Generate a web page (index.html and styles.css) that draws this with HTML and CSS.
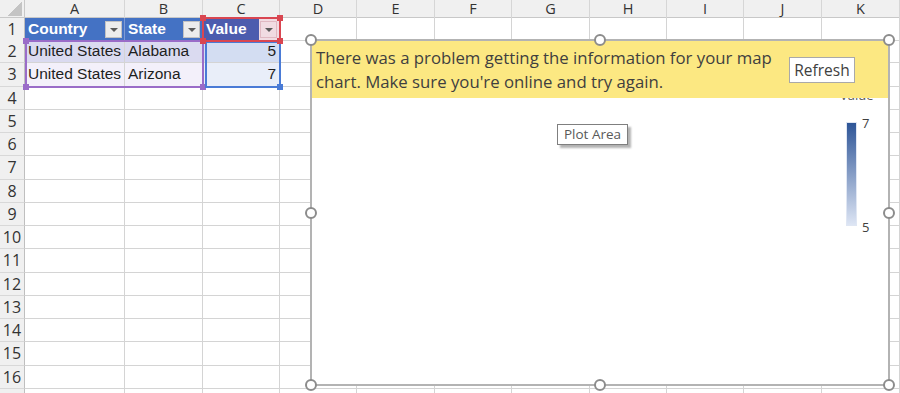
FILE: index.html
```html
<!DOCTYPE html>
<html lang="en">
<head>
    <meta charset="UTF-8">
    <title>Map chart - Excel</title>
    <link rel="stylesheet" href="styles.css">
</head>
<body>
    <div class="sheet">
        <div class="row heads">
            <div class="corner"></div>
            <div class="ch">A</div><div class="ch">B</div><div class="ch">C</div><div class="ch">D</div>
            <div class="ch">E</div><div class="ch">F</div><div class="ch">G</div><div class="ch">H</div>
            <div class="ch">I</div><div class="ch">J</div><div class="ch">K</div>
        </div>
        <div class="row first">
            <div class="rh">1</div>
            <div class="c th">Country<span class="filter"></span></div>
            <div class="c th">State<span class="filter"></span></div>
            <div class="c th sel">Value<span class="filter"></span></div>
            <div class="c"></div><div class="c"></div><div class="c"></div><div class="c"></div>
            <div class="c"></div><div class="c"></div><div class="c"></div><div class="c"></div>
        </div>
        <div class="row">
            <div class="rh">2</div>
            <div class="c band">United States</div>
            <div class="c band">Alabama</div>
            <div class="c num band-v">5</div>
            <div class="c"></div><div class="c"></div><div class="c"></div><div class="c"></div>
            <div class="c"></div><div class="c"></div><div class="c"></div><div class="c"></div>
        </div>
        <div class="row">
            <div class="rh">3</div>
            <div class="c plain">United States</div>
            <div class="c plain">Arizona</div>
            <div class="c num plain-v">7</div>
            <div class="c"></div><div class="c"></div><div class="c"></div><div class="c"></div>
            <div class="c"></div><div class="c"></div><div class="c"></div><div class="c"></div>
        </div>
        <div class="row"><div class="rh">4</div><div class="c"></div><div class="c"></div><div class="c"></div><div class="c"></div><div class="c"></div><div class="c"></div><div class="c"></div><div class="c"></div><div class="c"></div><div class="c"></div><div class="c"></div></div>
        <div class="row"><div class="rh">5</div><div class="c"></div><div class="c"></div><div class="c"></div><div class="c"></div><div class="c"></div><div class="c"></div><div class="c"></div><div class="c"></div><div class="c"></div><div class="c"></div><div class="c"></div></div>
        <div class="row"><div class="rh">6</div><div class="c"></div><div class="c"></div><div class="c"></div><div class="c"></div><div class="c"></div><div class="c"></div><div class="c"></div><div class="c"></div><div class="c"></div><div class="c"></div><div class="c"></div></div>
        <div class="row"><div class="rh">7</div><div class="c"></div><div class="c"></div><div class="c"></div><div class="c"></div><div class="c"></div><div class="c"></div><div class="c"></div><div class="c"></div><div class="c"></div><div class="c"></div><div class="c"></div></div>
        <div class="row"><div class="rh">8</div><div class="c"></div><div class="c"></div><div class="c"></div><div class="c"></div><div class="c"></div><div class="c"></div><div class="c"></div><div class="c"></div><div class="c"></div><div class="c"></div><div class="c"></div></div>
        <div class="row"><div class="rh">9</div><div class="c"></div><div class="c"></div><div class="c"></div><div class="c"></div><div class="c"></div><div class="c"></div><div class="c"></div><div class="c"></div><div class="c"></div><div class="c"></div><div class="c"></div></div>
        <div class="row"><div class="rh">10</div><div class="c"></div><div class="c"></div><div class="c"></div><div class="c"></div><div class="c"></div><div class="c"></div><div class="c"></div><div class="c"></div><div class="c"></div><div class="c"></div><div class="c"></div></div>
        <div class="row"><div class="rh">11</div><div class="c"></div><div class="c"></div><div class="c"></div><div class="c"></div><div class="c"></div><div class="c"></div><div class="c"></div><div class="c"></div><div class="c"></div><div class="c"></div><div class="c"></div></div>
        <div class="row"><div class="rh">12</div><div class="c"></div><div class="c"></div><div class="c"></div><div class="c"></div><div class="c"></div><div class="c"></div><div class="c"></div><div class="c"></div><div class="c"></div><div class="c"></div><div class="c"></div></div>
        <div class="row"><div class="rh">13</div><div class="c"></div><div class="c"></div><div class="c"></div><div class="c"></div><div class="c"></div><div class="c"></div><div class="c"></div><div class="c"></div><div class="c"></div><div class="c"></div><div class="c"></div></div>
        <div class="row"><div class="rh">14</div><div class="c"></div><div class="c"></div><div class="c"></div><div class="c"></div><div class="c"></div><div class="c"></div><div class="c"></div><div class="c"></div><div class="c"></div><div class="c"></div><div class="c"></div></div>
        <div class="row"><div class="rh">15</div><div class="c"></div><div class="c"></div><div class="c"></div><div class="c"></div><div class="c"></div><div class="c"></div><div class="c"></div><div class="c"></div><div class="c"></div><div class="c"></div><div class="c"></div></div>
        <div class="row"><div class="rh">16</div><div class="c"></div><div class="c"></div><div class="c"></div><div class="c"></div><div class="c"></div><div class="c"></div><div class="c"></div><div class="c"></div><div class="c"></div><div class="c"></div><div class="c"></div></div>
        <!-- row 17 only peeks in at the bottom edge -->
        <div class="row"><div class="rh"></div><div class="c"></div><div class="c"></div><div class="c"></div><div class="c"></div><div class="c"></div><div class="c"></div><div class="c"></div><div class="c"></div><div class="c"></div><div class="c"></div><div class="c"></div></div>
    </div>

    <!-- range highlights from the chart's data references -->
    <div class="ref ref-name"><span class="tl"></span><span class="tr"></span><span class="bl"></span><span class="br"></span></div>
    <div class="ref ref-cat"><span class="tl"></span><span class="tr"></span><span class="bl"></span><span class="br"></span></div>
    <div class="ref ref-val"><span class="br"></span></div>

    <div class="chart">
        <div class="notice">
            <p class="notice-text">There was a problem getting the information for your map<br>chart. Make sure you're online and try again.</p>
            <button class="refresh-btn">Refresh</button>
        </div>

        <div class="legend">
            <div class="legend-title">Value</div>
            <div class="legend-bar"></div>
            <span class="legend-max">7</span>
            <span class="legend-min">5</span>
        </div>

        <div class="tip">Plot Area</div>

        <span class="hd hd-tl"></span><span class="hd hd-tm"></span><span class="hd hd-tr"></span>
        <span class="hd hd-ml"></span><span class="hd hd-mr"></span>
        <span class="hd hd-bl"></span><span class="hd hd-bm"></span><span class="hd hd-br"></span>
    </div>
</body>
</html>
```

FILE: styles.css
```css
:root {
    --cols: 25px 100px 78px 77px 77px 78px 77px 78px 77px 77px 78px 78px;
    --grid: #d4d4d4;
    --head-bg: #f0f0f0;
    --table-blue: #4472c4;
    --text: #1e1e1e;
    --ui-font: "Open Sans", "Noto Sans", sans-serif;
}

body {
    margin: 0;
    width: 900px;
    height: 393px;
    overflow: hidden;
    position: relative;
    background: #fff;
    font-family: "Liberation Sans", Arial, sans-serif;
    color: var(--text);
}

.row {
    display: grid;
    grid-template-columns: var(--cols);
    height: 23.25px;
}

.row.heads {
    height: 18px;
    background: var(--head-bg);
    box-shadow: inset 0 -1px 0 #c8c8c8;
}

.row.first {
    height: 22px;
}

.corner {
    position: relative;
    border-right: 1px solid #c8c8c8;
}

.corner::after {
    content: "";
    position: absolute;
    right: 2px;
    bottom: 2px;
    width: 15px;
    height: 14px;
    background: linear-gradient(to bottom right, transparent 50%, #c4c4c4 50%);
}

.ch {
    border-right: 1px solid #d6d6d6;
    text-align: center;
    font-family: var(--ui-font);
    font-size: 14.5px;
    line-height: 18px;
    color: #333;
}

.rh {
    background: var(--head-bg);
    border-right: 1px solid #bfbfbf;
    border-bottom: 1px solid #d8d8d8;
    box-sizing: border-box;
    text-align: center;
    font-family: var(--ui-font);
    font-size: 16px;
    line-height: 22px;
    color: #333;
}

.c {
    border-right: 1px solid var(--grid);
    border-bottom: 1px solid var(--grid);
    box-sizing: border-box;
    display: flex;
    align-items: center;
    padding: 0 3px;
    font-size: 15.5px;
    white-space: nowrap;
    overflow: hidden;
}

.th {
    background: var(--table-blue);
    color: #fff;
    font-weight: bold;
    padding-right: 2px;
    border-right-color: #7d9ad4;
}

.th.sel {
    background: linear-gradient(to right, #4c5cae 0, #4c5cae 56px, #f1dbe2 56px);
}

.filter {
    margin-left: auto;
    width: 17px;
    height: 17px;
    box-sizing: border-box;
    background: #ececec;
    border: 1px solid #c2c2c2;
    position: relative;
}

.filter::after {
    content: "";
    position: absolute;
    left: 4px;
    top: 6px;
    border-left: 4px solid transparent;
    border-right: 4px solid transparent;
    border-top: 4px solid #5a5a5a;
}

.th.sel .filter {
    background: #f1dbe2;
    border-color: #e0b8c2;
}

.band { background: #dadaf0; }
.band-v { background: #d3ddf2; }
.plain { background: #f3f0fa; }
.plain-v { background: #e9eef9; }

.num {
    justify-content: flex-end;
}

/* reference outlines */
.ref {
    position: absolute;
    border: 2px solid;
    box-sizing: border-box;
}

.ref span {
    position: absolute;
    width: 6px;
    height: 6px;
    background: currentColor;
}

.ref .tl { left: -4px; top: -4px; }
.ref .tr { right: -4px; top: -4px; }
.ref .bl { left: -4px; bottom: -4px; }
.ref .br { right: -4px; bottom: -4px; }

.ref-name {
    left: 202px;
    top: 17px;
    width: 79px;
    height: 25px;
    color: #d94651;
    z-index: 2;
}

.ref-cat {
    left: 25px;
    top: 40px;
    width: 179px;
    height: 48px;
    color: #9a6cc8;
}

.ref-val {
    left: 205px;
    top: 41px;
    width: 76px;
    height: 47px;
    color: #4a7bd6;
}

/* chart object */
.chart {
    position: absolute;
    left: 310px;
    top: 39px;
    width: 580px;
    height: 347px;
    box-sizing: border-box;
    border: 2px solid #b3b3b3;
    background: #fff;
    font-family: var(--ui-font);
}

.notice {
    position: relative;
    z-index: 1;
    display: flex;
    align-items: center;
    height: 57px;
    padding: 0 33px 0 4px;
    background: #fce882;
}

.notice-text {
    margin: 0;
    font-size: 16.75px;
    line-height: 24px;
    color: #3f3f3f;
}

.refresh-btn {
    margin-left: auto;
    width: 66px;
    height: 26px;
    padding: 0;
    background: #fff;
    border: 1px solid #a9a9a9;
    font-family: var(--ui-font);
    font-size: 15.5px;
    color: #404040;
}

.legend-title {
    position: absolute;
    left: 528px;
    top: 45px;
    font-size: 13px;
    color: #595959;
}

.legend-bar {
    position: absolute;
    left: 534px;
    top: 81px;
    width: 11px;
    height: 104px;
    box-sizing: border-box;
    border: 1px solid #dfe6f3;
    background: linear-gradient(#2e5597, #dde5f4);
}

.legend-max,
.legend-min {
    position: absolute;
    left: 550px;
    font-size: 13px;
    color: #404040;
}

.legend-max { top: 73px; }
.legend-min { top: 177px; }

.tip {
    position: absolute;
    left: 245px;
    top: 83px;
    width: 71px;
    height: 21px;
    box-sizing: border-box;
    border: 1px solid #7f7f7f;
    background: #fff;
    box-shadow: 3px 3px 2px rgba(0, 0, 0, 0.3);
    font-size: 13.5px;
    line-height: 19px;
    text-align: center;
    color: #595959;
}

.hd {
    position: absolute;
    z-index: 2;
    width: 12px;
    height: 12px;
    box-sizing: border-box;
    border: 2px solid #8c8c8c;
    border-radius: 50%;
    background: #fff;
    transform: translate(-50%, -50%);
}

.hd-tl { left: -1px; top: -1px; }
.hd-tm { left: 50%; top: -1px; }
.hd-tr { left: calc(100% + 1px); top: -1px; }
.hd-ml { left: -1px; top: 50%; }
.hd-mr { left: calc(100% + 1px); top: 50%; }
.hd-bl { left: -1px; top: calc(100% + 1px); }
.hd-bm { left: 50%; top: calc(100% + 1px); }
.hd-br { left: calc(100% + 1px); top: calc(100% + 1px); }
```
